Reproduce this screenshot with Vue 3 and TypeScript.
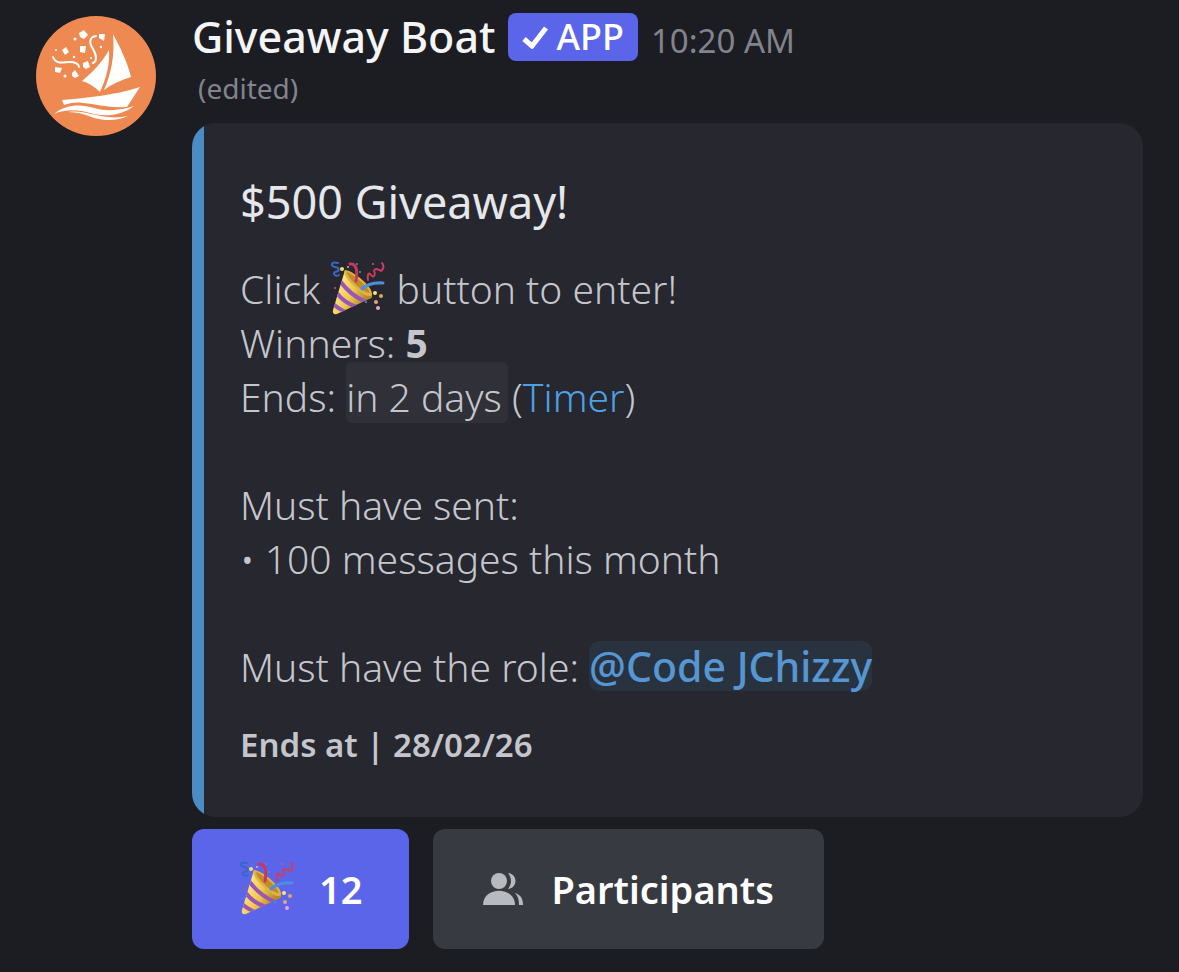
<script setup lang="ts">
import { ref } from 'vue'

const entries = ref(12)
const joined = ref(false)

function toggleEntry(): void {
  joined.value = !joined.value
  entries.value += joined.value ? 1 : -1
}
</script>

<template>
  <svg class="symbols" aria-hidden="true">
    <defs>
      <linearGradient id="cone-fill" x1="8" y1="30" x2="34" y2="42" gradientUnits="userSpaceOnUse">
        <stop offset="0" stop-color="#fbe27a" />
        <stop offset="0.45" stop-color="#efc94f" />
        <stop offset="1" stop-color="#b98a26" />
      </linearGradient>
      <clipPath id="cone-clip">
        <path d="M15 9 L42 34 Q43 37 39 38 L7 53 Q2 54 3 49 Z" />
      </clipPath>
      <symbol id="party" viewBox="0 0 56 56">
        <path d="M15 9 L42 34 Q43 37 39 38 L7 53 Q2 54 3 49 Z" fill="url(#cone-fill)" />
        <g clip-path="url(#cone-clip)" fill="none" stroke="#9a55b8" stroke-width="4">
          <path d="M10 20 Q20 34 36 41" />
          <path d="M6 31 Q14 42 27 46" />
          <path d="M2 42 Q8 48 16 51" />
        </g>
        <path d="M15 9 C22 9 44 26 42 34 C39 37 32 33 26 27 C19 21 12 13 15 9 Z" fill="#e0b244" />
        <path d="M17 11 C23 13 38 25 40 32 C35 32 28 26 24 22 C20 18 17 14 17 11 Z" fill="#c08c2b" />
        <g fill="none" stroke-linecap="round">
          <path d="M20 3 C26 2 28 9 26 20" stroke="#c9375c" stroke-width="3" />
          <path d="M32 28 Q39 21 53 22" stroke="#4a8fe0" stroke-width="3" />
          <path d="M8 2 C1 0 0 5 5 6 C10 7 10 10 5 11 C2 13 6 16 9 14" stroke="#3769c4" stroke-width="2" />
          <path d="M38 19 C37 13 39 11 41 14 C44 18 46 13 44 10 C45 6 49 9 51 10 C55 7 53 3 52 2" stroke="#cc3b62" stroke-width="2" />
        </g>
        <circle cx="12" cy="8" r="2" fill="#f7de72" />
        <circle cx="18" cy="6" r="1" fill="#f19bd0" />
        <circle cx="27" cy="3" r="1" fill="#4a8fe0" />
        <circle cx="30" cy="11" r="1" fill="#4a8fe0" />
        <circle cx="43" cy="3" r="1" fill="#e0557c" />
        <circle cx="5" cy="27" r="1" fill="#d64b78" />
        <circle cx="45" cy="32" r="2" fill="#f7e18c" />
        <circle cx="51" cy="35" r="2" fill="#e7a44f" />
        <circle cx="46" cy="41" r="2" fill="#e9a27c" />
        <circle cx="48" cy="47" r="2" fill="#eba3d2" />
        <circle cx="36" cy="41" r="1" fill="#4a8fe0" />
      </symbol>
    </defs>
  </svg>

  <article class="message">
    <svg class="avatar" viewBox="0 0 120 120" role="img" aria-label="Giveaway Boat avatar">
      <circle cx="60" cy="60" r="60" fill="#ee8a51" />
      <g fill="#fff">
        <path d="M77 18 C84 31 91 45 95 61 C85 64 76 68 68 74 C75 58 79 40 77 18 Z" />
        <path d="M73 34 C74 49 70 63 64 76 C59 71 53 67 46 65 C57 56 66 46 73 34 Z" />
        <path d="M26 84 C51 82 80 79 104 71 L91 91 C71 92 61 88 47 87 C40 86 34 87 28 89 Z" />
        <path d="M18 98 C30 88 45 88 58 92 C72 96 86 94 98 90 C86 99 72 101 58 98 C44 94 31 92 18 98 Z" />
        <path d="M32 96 C47 94 58 100 72 101 C80 102 86 101 92 100 C82 105 69 105 58 102 C49 98 41 96 32 96 Z" />
        <path d="M43 17 L48 14 L52 19 L48 23 L44 21 Z" />
        <path d="M63 18 L69 18 L68 25 L63 22 Z" />
        <path d="M26 34 L30 31 L33 36 L29 39 Z" />
        <path d="M44 30 L50 30 L49 37 L44 36 Z" />
        <path d="M19 51 L26 52 L24 57 L19 56 Z" />
        <path d="M47 47 L52 45 L54 51 L50 53 L47 51 Z" />
        <path d="M36 57 L39 54 L43 60 L39 62 L36 60 Z" />
        <circle cx="39" cy="23" r="1.5" />
        <circle cx="38" cy="41" r="1.2" />
        <circle cx="65" cy="31" r="1.2" />
        <circle cx="29" cy="60" r="1.5" />
        <circle cx="20" cy="34" r="1" />
        <circle cx="55" cy="42" r="1" />
      </g>
      <g fill="none" stroke="#fff" stroke-width="2" stroke-linecap="round">
        <path d="M17 41 C20 49 28 46 34 46 C39 46 43 48 43 51" />
        <path d="M60 20 C53 21 53 27 57 33 C61 40 61 45 57 47" />
      </g>
    </svg>

    <div class="content">
      <header class="header">
        <h1 class="author">Giveaway Boat</h1>
        <span class="badge">
          <svg class="check" viewBox="0 0 26 24" aria-hidden="true">
            <path d="M2 14 L10 21 L24 3" fill="none" stroke="#fff" stroke-width="5" />
          </svg>
          APP
        </span>
        <time class="time">10:20 AM</time>
      </header>
      <p class="edited">(edited)</p>

      <section class="embed">
        <h2 class="title">$500 Giveaway!</h2>
        <p>
          Click
          <svg class="emoji inline" role="img" aria-label="party popper"><use href="#party" /></svg>
          button to enter!
        </p>
        <p>Winners: <strong>5</strong></p>
        <p>Ends: <time class="relative">in 2 days</time> (<a class="link" href="#timer">Timer</a>)</p>
        <p class="gap">Must have sent:</p>
        <p>• 100 messages this month</p>
        <p class="gap">Must have the role: <a class="mention" href="#role">@Code JChizzy</a></p>
        <footer class="footer">Ends at | 28/02/26</footer>
      </section>

      <div class="actions">
        <button class="button primary" type="button" :aria-pressed="joined" @click="toggleEntry">
          <svg class="emoji" role="img" aria-label="Enter giveaway"><use href="#party" /></svg>
          {{ entries }}
        </button>
        <button class="button secondary" type="button">
          <svg class="people" viewBox="0 0 40 32" aria-hidden="true">
            <g fill="#b9babf">
              <circle cx="16" cy="8" r="8" />
              <path d="M0 32 C0 13 32 13 32 32 Z" />
              <path d="M25 0 C35 1 35 15 25 16 C29 11 29 5 25 0 Z" />
              <path d="M32 20 C38 22 40 26 40 32 L36 32 C36 27 35 23 32 20 Z" />
            </g>
          </svg>
          Participants
        </button>
      </div>
    </div>
  </article>
</template>

<style>
body {
  margin: 0;
  background: #1c1d22;
}
</style>

<style scoped>
.symbols {
  position: absolute;
  width: 0;
  height: 0;
}

.message {
  display: flex;
  align-items: flex-start;
  gap: 36px;
  padding: 12px 36px 23px;
  color: #c5c6cc;
  font-family: "Noto Sans", "Open Sans", sans-serif;
  font-size: 39px;
  line-height: 54px;
}

.avatar {
  flex: none;
  width: 120px;
  height: 120px;
  margin-top: 4px;
}

.content {
  flex: 1;
  min-width: 0;
}

.header {
  display: flex;
  align-items: center;
  gap: 13px;
  height: 50px;
  line-height: 50px;
}

.author {
  align-self: baseline;
  margin: 0;
  color: #f5f5f7;
  font-size: 43px;
  font-weight: 550;
}

.badge {
  display: flex;
  align-items: center;
  gap: 8px;
  height: 48px;
  padding: 0 14px;
  border-radius: 8px;
  background: #5b65ea;
  color: #fff;
  font-size: 36px;
  font-weight: 500;
}

.check {
  width: 26px;
  height: 24px;
}

.time {
  align-self: baseline;
  color: #82838d;
  font-size: 33px;
}

.edited {
  margin: 4px 0 12px;
  padding-left: 6px;
  color: #82838d;
  font-size: 28px;
  line-height: 45px;
}

.embed {
  padding: 52px 48px;
  border-radius: 24px;
  background: linear-gradient(to right, #4b8cc5 12px, #26272f 12px);
}

.embed p {
  margin: 0;
  font-weight: 350;
}

.embed .title {
  margin: 0 0 33px;
  color: #e6e7eb;
  font-size: 45px;
  font-weight: 400;
}

.embed .gap {
  margin-top: 54px;
}

.embed strong {
  font-weight: 700;
}

.emoji {
  width: 56px;
  height: 56px;
}

.inline {
  margin: -8px 0;
  vertical-align: -5px;
}

.relative {
  margin-right: -6px;
  padding: 8px 6px 0 0;
  border-radius: 6px;
  background: #303138;
}

.link {
  color: #4fa0e4;
  text-decoration: none;
}

.mention {
  display: inline-block;
  border-radius: 10px;
  background: #29333f;
  color: #5596d3;
  font-size: 41px;
  font-weight: 500;
  line-height: 50px;
  text-decoration: none;
}

.footer {
  margin-top: 31px;
  font-size: 33px;
  font-weight: 600;
  line-height: 40px;
}

.actions {
  display: flex;
  gap: 24px;
  margin-top: 12px;
}

.button {
  display: flex;
  align-items: center;
  height: 120px;
  border: 0;
  border-radius: 12px;
  color: #fff;
  font-family: inherit;
  font-size: 38px;
  font-weight: 600;
}

.primary {
  gap: 24px;
  padding: 0 47px;
  background: #5b65ea;
}

.secondary {
  gap: 28px;
  padding: 0 50px;
  background: #383a42;
}

.people {
  width: 40px;
  height: 32px;
}
</style>
